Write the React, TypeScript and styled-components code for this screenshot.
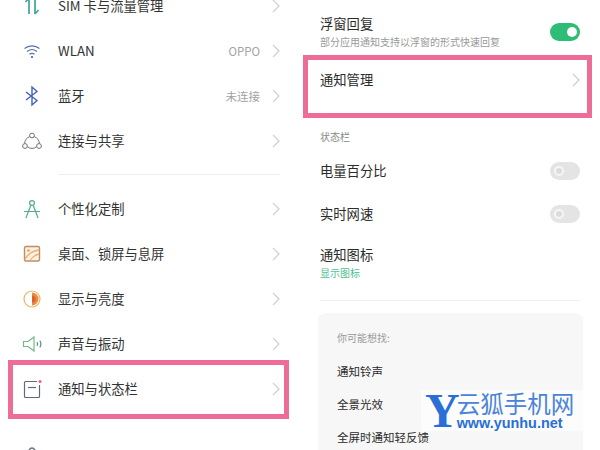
import React from 'react';
import styled, { createGlobalStyle } from 'styled-components';

const GlobalStyle = createGlobalStyle`
  html, body {
    margin: 0;
    padding: 0;
    background: #ffffff;
  }
  body {
    font-family: "Noto Sans CJK SC", "Liberation Sans", sans-serif;
  }
`;

const Chevron = () => (
  <ChevronIcon viewBox="0 0 8 14" fill="none">
    <path d="M1 1l6 6-6 6" stroke="#d0d0d0" strokeWidth="1.2" />
  </ChevronIcon>
);

const SimIcon = () => (
  <svg viewBox="0 0 24 24" width="24" height="24" fill="none" stroke="#4aa9a0" strokeWidth="1.8">
    <path d="M9 20V4M9 4L5.500 8" />
    <path d="M15 4v16M15 20l3.500-4" />
  </svg>
);

const WifiIcon = () => (
  <svg viewBox="0 0 24 24" width="24" height="24" fill="none" stroke="#5a6fb0" strokeWidth="1.2">
    <path d="M4.500 9.500c4.500-3.500 10.500-3.500 15 0" />
    <path d="M7 12.500c3-2.400 7-2.400 10 0" />
    <path d="M9.500 15.200c1.600-1.200 3.400-1.200 5 0" />
    <circle cx="12" cy="18" r="1" fill="#3f4f8f" stroke="none" />
  </svg>
);

const BluetoothIcon = () => (
  <svg viewBox="0 0 24 24" width="24" height="24" fill="none" stroke="#3f63b8" strokeWidth="1.4">
    <path d="M6 8l11 8.500-5 4.500V3l5 4.500L6 16" />
  </svg>
);

const ShareIcon = () => (
  <svg viewBox="0 0 24 24" width="24" height="24" fill="none" stroke="#757575" strokeWidth="1">
    <circle cx="12" cy="6.500" r="2.400" />
    <circle cx="5" cy="17" r="2.400" />
    <circle cx="19" cy="17" r="2.400" />
    <path d="M9.800 7.600A8 8 0 0 0 4.600 14.600M14.200 7.600a8 8 0 0 1 5.200 7M7.400 17.800a8 8 0 0 0 9.200 0" />
  </svg>
);

const CompassIcon = () => (
  <svg viewBox="0 0 24 24" width="24" height="24" fill="none" stroke="#4fae8c" strokeWidth="1.2">
    <circle cx="12" cy="6" r="2.400" />
    <path d="M10.800 8.200L6 21M13.200 8.200L18 21M4 14.500h16" />
  </svg>
);

const WallpaperIcon = () => (
  <svg viewBox="0 0 24 24" width="24" height="24" fill="none" stroke="#c08e62" strokeWidth="1.400">
    <rect x="4.500" y="4.500" width="15" height="14.500" rx="1.500" fill="#fdf1e2" />
    <circle cx="8.500" cy="8.500" r="1.200" fill="#e89a55" stroke="none" />
    <path d="M5 17c3-5 7-8 14-9M10 18.500c2-3.500 5-5.500 9-6.500" stroke="#e6b27c" />
  </svg>
);

const BrightnessIcon = () => (
  <svg viewBox="0 0 24 24" width="24" height="24" fill="none">
    <circle cx="12" cy="12" r="8" stroke="#f0b460" strokeWidth="1.200" />
    <path d="M12 5.500a6.500 6.500 0 0 1 0 13V5.500z" fill="#ee8a3a" />
    <path d="M12 8.500a3.500 3.500 0 0 1 0 7V8.500z" fill="#d9613a" />
  </svg>
);

const SoundIcon = () => (
  <svg viewBox="0 0 24 24" width="24" height="24" fill="none" stroke="#74b98a" strokeWidth="1.200">
    <path d="M3.500 9.500h4.500l6-4.500v14l-6-4.500H3.500z" />
    <path d="M17 10c.8 1.200.8 2.800 0 4M19.800 8.500c1.400 2.200 1.400 4.800 0 7" stroke="#5a8f7c" />
  </svg>
);

const NotifyIcon = () => (
  <svg viewBox="0 0 24 24" width="24" height="24" fill="none" stroke="#5f6b78" strokeWidth="1.200">
    <path d="M17 4.500H5.500a1 1 0 0 0-1 1v14a1 1 0 0 0 1 1h13a1 1 0 0 0 1-1V8" />
    <path d="M8 10.500h8" />
    <circle cx="20" cy="4.500" r="1.600" fill="#ea6a80" stroke="none" />
  </svg>
);

const LockIcon = () => (
  <svg viewBox="0 0 24 24" width="24" height="24" fill="none" stroke="#5f6b78" strokeWidth="1.400">
    <path d="M8 9a4 7 0 0 1 8 0v3M8 9v3" />
  </svg>
);

const TopGroup = [
  { icon: <SimIcon />, label: 'SIM 卡与流量管理' },
  { icon: <WifiIcon />, label: 'WLAN', value: 'OPPO' },
  { icon: <BluetoothIcon />, label: '蓝牙', value: '未连接' },
  { icon: <ShareIcon />, label: '连接与共享' },
];

const BottomGroup = [
  { icon: <CompassIcon />, label: '个性化定制' },
  { icon: <WallpaperIcon />, label: '桌面、锁屏与息屏' },
  { icon: <BrightnessIcon />, label: '显示与亮度' },
  { icon: <SoundIcon />, label: '声音与振动' },
  { icon: <NotifyIcon />, label: '通知与状态栏' },
];

const SettingsRow = ({ icon, label, value }: { icon: React.ReactNode; label: string; value?: string }) => (
  <MenuRow>
    <IconSlot>{icon}</IconSlot>
    <MenuLabel>{label}</MenuLabel>
    {value && <MenuValue>{value}</MenuValue>}
    <Chevron />
  </MenuRow>
);

const App = () => {
  return (
    <Page>
      <GlobalStyle />
      <LeftPanel>
        {TopGroup.map((item) => (
          <SettingsRow key={item.label} {...item} />
        ))}
        <MenuDivider />
        {BottomGroup.map((item) => (
          <SettingsRow key={item.label} {...item} />
        ))}
        <NextGroupIcon>
          <LockIcon />
        </NextGroupIcon>
      </LeftPanel>
      <RightPanel>
        <OptionBlock>
          <OptionText>
            <OptionTitle>浮窗回复</OptionTitle>
            <OptionHint>部分应用通知支持以浮窗的形式快速回复</OptionHint>
          </OptionText>
          <Toggle $on />
        </OptionBlock>
        <ManageRow>
          <OptionTitle>通知管理</OptionTitle>
          <Chevron />
        </ManageRow>
        <SectionLabel>状态栏</SectionLabel>
        <SwitchRow>
          <OptionTitle>电量百分比</OptionTitle>
          <Toggle />
        </SwitchRow>
        <SwitchRow>
          <OptionTitle>实时网速</OptionTitle>
          <Toggle />
        </SwitchRow>
        <IconOption>
          <OptionTitle>通知图标</OptionTitle>
          <GreenHint>显示图标</GreenHint>
        </IconOption>
        <RightDivider />
        <SuggestCard>
          <SuggestTitle>你可能想找:</SuggestTitle>
          <SuggestItem>通知铃声</SuggestItem>
          <SuggestItem>全景光效</SuggestItem>
          <SuggestItem>全屏时通知轻反馈</SuggestItem>
        </SuggestCard>
      </RightPanel>
      <Highlight $left={8} $top={360} $width={281} $height={59} />
      <Highlight $left={303} $top={55} $width={289} $height={63} />
      <Watermark>
        <WatermarkY>Y</WatermarkY>
        <WatermarkText>
          <WatermarkName>云狐手机网</WatermarkName>
          <WatermarkUrl>www.yunhu.net</WatermarkUrl>
        </WatermarkText>
      </Watermark>
    </Page>
  );
};

export default App;

const Page = styled.div`
  position: relative;
  display: flex;
  width: 600px;
  height: 450px;
  overflow: hidden;
  background: #ffffff;
`;

const LeftPanel = styled.div`
  display: flex;
  flex-direction: column;
  flex: none;
  width: 300px;
  margin-top: -17px;
  padding: 0 20px;
  box-sizing: border-box;
`;

const MenuRow = styled.div`
  display: flex;
  flex: none;
  align-items: center;
  height: 45px;
`;

const IconSlot = styled.span`
  display: flex;
  flex: none;
  width: 24px;
  height: 24px;
  margin-right: 14px;
`;

const NextGroupIcon = styled(IconSlot)`
  margin-top: 35px;
`;

const MenuLabel = styled.span`
  flex: 1;
  font-size: 13.3px;
  color: #333333;
`;

const MenuValue = styled.span`
  margin-right: 12px;
  font-size: 11.5px;
  color: #a3a3a3;
`;

const ChevronIcon = styled.svg`
  flex: none;
  width: 8px;
  height: 14px;
`;

const MenuDivider = styled.div`
  flex: none;
  height: 1px;
  margin: 11px 0 11px 38px;
  background: #eeeeee;
`;

const RightPanel = styled.div`
  display: flex;
  flex-direction: column;
  flex: none;
  width: 300px;
  padding: 15px 20px 0 20px;
  box-sizing: border-box;
`;

const OptionBlock = styled.div`
  display: flex;
  flex: none;
  align-items: center;
  justify-content: space-between;
`;

const OptionText = styled.div`
  display: flex;
  flex-direction: column;
  gap: 2px;
`;

const OptionTitle = styled.span`
  font-size: 13.3px;
  line-height: 18px;
  color: #2b2b2b;
`;

const OptionHint = styled.span`
  font-size: 10px;
  line-height: 14px;
  color: #999999;
`;

const GreenHint = styled(OptionHint)`
  margin-top: 2px;
  color: #4fbf95;
`;

const Toggle = styled.span<{ $on?: boolean }>`
  position: relative;
  flex: none;
  width: 30px;
  height: 18px;
  border-radius: 9px;
  background: ${(props) => (props.$on ? '#2dbd76' : '#e4e4e4')};

  &::after {
    content: '';
    position: absolute;
    top: 4px;
    left: ${(props) => (props.$on ? '17px' : '4px')};
    box-sizing: border-box;
    width: 10px;
    height: 10px;
    border-radius: 50%;
    background: ${(props) => (props.$on ? '#ffffff' : '#dcdcdc')};
    border: ${(props) => (props.$on ? 'none' : '2px solid #f6f6f6')};
  }
`;

const ManageRow = styled.div`
  display: flex;
  flex: none;
  align-items: center;
  justify-content: space-between;
  margin-top: 22px;
  height: 18px;
`;

const SectionLabel = styled.div`
  flex: none;
  margin-top: 41px;
  font-size: 10px;
  line-height: 14px;
  color: #888888;
`;

const SwitchRow = styled.div`
  display: flex;
  flex: none;
  align-items: center;
  justify-content: space-between;
  height: 18px;
  margin-top: 18px;

  & + & {
    margin-top: 25px;
  }
`;

const IconOption = styled.div`
  display: flex;
  flex: none;
  flex-direction: column;
  margin-top: 23px;
`;

const RightDivider = styled.div`
  flex: none;
  height: 1px;
  margin: 20px 0 12px 0;
  background: #f0f0f0;
`;

const SuggestCard = styled.div`
  display: flex;
  flex: none;
  flex-direction: column;
  margin: 0 -3px 0 -2px;
  padding: 18px 19px 0 19px;
  height: 200px;
  box-sizing: border-box;
  border-radius: 8px;
  background: #f7f7f7;
`;

const SuggestTitle = styled.span`
  margin-bottom: 1px;
  font-size: 10px;
  line-height: 14px;
  color: #999999;
`;

const SuggestItem = styled.span`
  margin-top: 17px;
  font-size: 11.5px;
  line-height: 16px;
  color: #2b2b2b;
`;

const Highlight = styled.div<{ $left: number; $top: number; $width: number; $height: number }>`
  position: absolute;
  left: ${(props) => props.$left}px;
  top: ${(props) => props.$top}px;
  width: ${(props) => props.$width}px;
  height: ${(props) => props.$height}px;
  box-sizing: border-box;
  border: 5px solid #ee6d97;
`;

const Watermark = styled.div`
  position: absolute;
  left: 421px;
  top: 390px;
  display: flex;
  align-items: center;
  padding: 0 12px 0 4px;
  background: rgba(255, 255, 255, 0.6);
`;

const WatermarkY = styled.span`
  font-family: "Liberation Serif", serif;
  font-size: 48px;
  font-weight: 700;
  line-height: 38px;
  color: #2a6ed8;
`;

const WatermarkText = styled.div`
  display: flex;
  flex-direction: column;
  margin-left: -3px;
`;

const WatermarkName = styled.span`
  font-size: 23.5px;
  line-height: 26px;
  color: #4a83da;
`;

const WatermarkUrl = styled.span`
  font-family: "Liberation Sans", sans-serif;
  font-size: 14.4px;
  line-height: 15px;
  font-weight: 700;
  color: #2a6ed8;
`;
